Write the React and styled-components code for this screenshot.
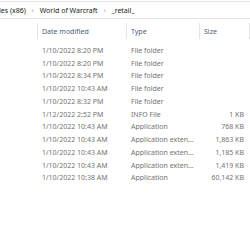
import React from "react";
import styled, { createGlobalStyle } from "styled-components";

const Global = createGlobalStyle`
  html, body { margin: 0; padding: 0; background: #ffffff; }
  body { font-family: "Noto Sans", "Open Sans", sans-serif; overflow: hidden; }
`;

const Window = styled.div`
  width: 250px;
  height: 250px;
  background: #ffffff;
  display: flex;
  flex-direction: column;
  overflow: hidden;
`;

const AddressBar = styled.div`
  margin-top: 1px;
  height: 16px;
  border-top: 1px solid #e3e3e3;
  border-bottom: 1px solid #e3e3e3;
  display: flex;
  align-items: center;
  gap: 6px;
  font-size: 7px;
  color: #1a1a1a;
  white-space: nowrap;
  margin-left: -37px;
`;

const Crumb = styled.span`
  line-height: 1;
`;

const Chevron = styled.span`
  font-size: 6px;
  color: #666;
  line-height: 1;
`;

const Grid = styled.div`
  display: grid;
  grid-template-columns: 37px 89px 73px 50px 1px;
`;

const HeaderRow = styled(Grid)`
  margin-top: 4px;
  height: 16px;
`;

const HeaderCell = styled.div`
  border-left: ${(p) => (p.$sep ? "1px solid #e5e5e5" : "none")};
  padding-left: ${(p) => (p.$sep ? "4px" : "0")};
  display: flex;
  align-items: center;
  padding-top: 1px;
  font-size: 7px;
  color: #4c607a;
`;

const Rows = styled.div`
  margin-top: 5px;
  display: flex;
  flex-direction: column;
`;

const Row = styled(Grid)`
  height: 12.75px;
  align-items: center;
  font-size: 7px;
  color: #737373;
  white-space: nowrap;
`;

const Cell = styled.div`
  padding-left: ${(p) => (p.$pad ? "5px" : "0")};
  padding-right: ${(p) => (p.$right ? "5px" : "0")};
  text-align: ${(p) => (p.$right ? "right" : "left")};
  overflow: hidden;
  line-height: 1;
`;

const files = [
  ["1/10/2022 8:20 PM", "File folder", ""],
  ["1/10/2022 8:20 PM", "File folder", ""],
  ["1/10/2022 8:34 PM", "File folder", ""],
  ["1/10/2022 10:43 AM", "File folder", ""],
  ["1/10/2022 8:32 PM", "File folder", ""],
  ["1/12/2022 2:52 PM", "INFO File", "1 KB"],
  ["1/10/2022 10:43 AM", "Application", "768 KB"],
  ["1/10/2022 10:43 AM", "Application exten...", "1,863 KB"],
  ["1/10/2022 10:43 AM", "Application exten...", "1,185 KB"],
  ["1/10/2022 10:43 AM", "Application exten...", "1,419 KB"],
  ["1/10/2022 10:38 AM", "Application", "60,142 KB"],
];

export default function App() {
  return (
    <>
      <Global />
      <Window>
        <AddressBar>
          <Crumb>Program Files (x86)</Crumb>
          <Chevron>›</Chevron>
          <Crumb>World of Warcraft</Crumb>
          <Chevron>›</Chevron>
          <Crumb>_retail_</Crumb>
        </AddressBar>
        <HeaderRow>
          <HeaderCell />
          <HeaderCell $sep>Date modified</HeaderCell>
          <HeaderCell $sep>Type</HeaderCell>
          <HeaderCell $sep>Size</HeaderCell>
          <HeaderCell $sep />
        </HeaderRow>
        <Rows>
          {files.map(([date, type, size], i) => (
            <Row key={i}>
              <Cell />
              <Cell $pad>{date}</Cell>
              <Cell $pad>{type}</Cell>
              <Cell $right>{size}</Cell>
              <Cell />
            </Row>
          ))}
        </Rows>
      </Window>
    </>
  );
}
